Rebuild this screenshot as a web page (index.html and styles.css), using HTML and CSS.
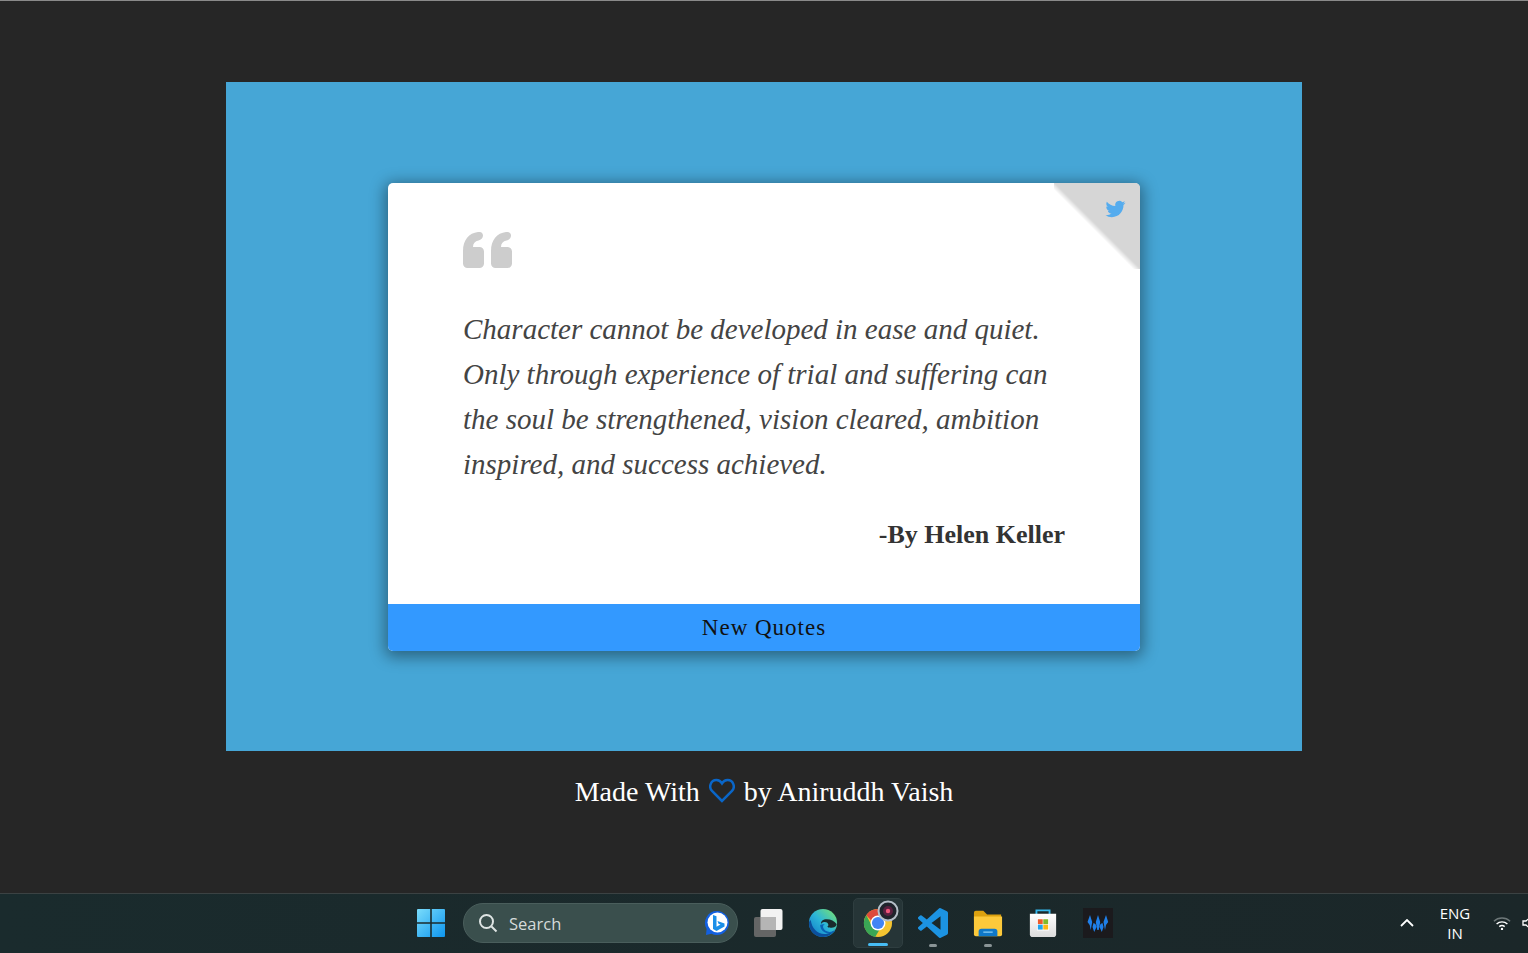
FILE: index.html
```html
<!DOCTYPE html>
<html lang="en">
<head>
    <meta charset="UTF-8">
    <meta name="viewport" content="width=device-width, initial-scale=1.0">
    <title>Random Quotes</title>
    <link rel="stylesheet" href="styles.css">
</head>
<body>
    <main class="page">
        <section class="panel">
            <div class="card">
                <a class="tweet" href="#" aria-label="Tweet this quote">
                    <svg class="tweet-icon" viewBox="0 0 24 24"><path d="M23.953 4.57a10 10 0 01-2.825.775 4.958 4.958 0 002.163-2.723c-.951.555-2.005.959-3.127 1.184a4.92 4.92 0 00-8.384 4.482C7.69 8.095 4.067 6.13 1.64 3.162a4.822 4.822 0 00-.666 2.475c0 1.71.87 3.213 2.188 4.096a4.904 4.904 0 01-2.228-.616v.06a4.923 4.923 0 003.946 4.827 4.996 4.996 0 01-2.212.085 4.936 4.936 0 004.604 3.417 9.867 9.867 0 01-6.102 2.105c-.39 0-.779-.023-1.17-.067a13.995 13.995 0 007.557 2.209c9.053 0 13.998-7.496 13.998-13.985 0-.21 0-.42-.015-.63A9.935 9.935 0 0024 4.59z"/></svg>
                </a>
                <div class="card-body">
                    <svg class="quote-mark" viewBox="0 0 49 36"><path d="M4.500 36A4.500 4.500 0 0 1 0 31.500V19C0 8 6 1 15 0c3-.3 5 1 5 3.500S18 8 15.500 8.500C12 9.200 10 11.500 10 15h6.500a4.500 4.500 0 0 1 4.500 4.500v12a4.500 4.500 0 0 1-4.500 4.500zM32.500 36a4.500 4.500 0 0 1-4.500-4.500V19c0-11 6-18 15-19 3-.3 5 1 5 3.500S46 8 43.500 8.500C40 9.200 38 11.500 38 15h6.500a4.500 4.500 0 0 1 4.500 4.500v12a4.500 4.500 0 0 1-4.500 4.500z"/></svg>
                    <p class="quote">Character cannot be developed in ease and quiet.<br>Only through experience of trial and suffering can<br>the soul be strengthened, vision cleared, ambition<br>inspired, and success achieved.</p>
                    <p class="author">-By Helen Keller</p>
                </div>
                <button class="new-quote" type="button">New Quotes</button>
            </div>
        </section>
        <p class="credit">Made With
            <svg class="heart" viewBox="0 0 26 24"><path d="M13 22.500 3 12.400C-.6 8.700 1.600 1.500 7.400 1.500c2.600 0 4.400 1.300 5.600 3.300 1.200-2 3-3.300 5.600-3.300 5.800 0 8 7.200 4.400 10.900z"/></svg>
            by Aniruddh Vaish</p>
    </main>

    <footer class="taskbar">
        <div class="tile start">
            <svg class="icon" viewBox="0 0 30 30">
                <defs>
                    <linearGradient id="win" x1="0" y1="0" x2="1" y2="1"><stop offset="0" stop-color="#7adcfb"/><stop offset="1" stop-color="#0d95ee"/></linearGradient>
                </defs>
                <path fill="url(#win)" d="M1 2a1 1 0 0 1 1-1h12.200v13.200H1zM15.800 1H28a1 1 0 0 1 1 1v12.200H15.800zM1 15.800h13.200V29H2a1 1 0 0 1-1-1zM15.800 15.800H29V28a1 1 0 0 1-1 1H15.800z"/>
            </svg>
        </div>

        <div class="search">
            <svg class="search-icon" viewBox="0 0 20 20"><circle cx="8.500" cy="8.500" r="6.500"/><path d="m13.500 13.500 5 5"/></svg>
            <span class="search-label">Search</span>
            <svg class="bing" viewBox="0 0 26 26">
                <path fill="#1360e0" d="M13 1a12 12 0 1 1-5.500 22.700L2 25l.6-6A12 12 0 0 1 13 1z"/>
                <circle cx="13.500" cy="12.500" r="10" fill="#fff"/>
                <path fill="#1b8fe8" d="M9 5l3.500 1.200v10.600l4-2.200-2-.9-1-2.700 7 2.400v3.100L12.500 21 9 19z"/>
            </svg>
        </div>

        <div class="tile">
            <svg class="icon" viewBox="0 0 30 30">
                <rect x="7.500" y="1" width="22" height="21" rx="2" fill="#f2f2f2"/>
                <rect x="1" y="9" width="22" height="20" rx="2" fill="#6a6a6a" fill-opacity=".92"/>
                <rect x="7.500" y="9" width="15.500" height="13" fill="#b5b5b5"/>
            </svg>
        </div>

        <div class="tile">
            <svg class="icon" viewBox="0 0 32 32">
                <defs>
                    <linearGradient id="edge-top" x1="0" y1="1" x2="1" y2="0"><stop offset="0" stop-color="#0d72c9"/><stop offset=".5" stop-color="#2cb6d8"/><stop offset="1" stop-color="#7fe668"/></linearGradient>
                </defs>
                <circle cx="16" cy="16" r="15" fill="url(#edge-top)"/>
                <path fill="#0c4f9c" d="M3 13c1 9 8 16 17 14.500 4-.7 7-2.500 9-5-3 5.500-7.500 8.500-13 8.500C8 31 1 24.500 1 16c0-1.500 1-3 2-3z"/>
                <path fill="#1a2a2c" d="M14 17c-.5-3 2-5 6-5 4.500 0 8 2 10.500 5 0 2.500-2.500 4-6.500 4-1.500 0-3-.5-3.500-1 1-.5 1.500-1.500 1-3-.5-1.500-2.500-2.500-4.500-2-1.500.3-2.500 1-3 2z"/>
                <path fill="#0a62b4" d="M13 18c0 5 4 9 10 9 3 0 5-1 6-3-2 1-4 1.500-6 1.500-3 0-6-2-7-5 0-2 1-3 2-3.500-2.500 0-4.500 1-5 1z"/>
            </svg>
        </div>

        <div class="tile active">
            <svg class="icon" viewBox="0 0 32 32">
                <circle cx="16" cy="16" r="15" fill="#f4c430"/>
                <path fill="#dd4a3c" d="M16 1a15 15 0 0 1 13 7.500H16a7.500 7.500 0 0 0-7 5L3.500 7.800A15 15 0 0 1 16 1z"/>
                <path fill="#3aa655" d="M3.500 7.800 9.800 19.700a7.500 7.500 0 0 0 7.600 3.800L13 31A15 15 0 0 1 3.500 7.800z"/>
                <circle cx="16" cy="16" r="8" fill="#fff"/>
                <circle cx="16" cy="16" r="6.500" fill="#4285f4"/>
            </svg>
            <svg class="badge" viewBox="0 0 22 22">
                <circle cx="11" cy="11" r="9.500" fill="#20242c" stroke="#b5bfc8" stroke-width="2"/>
                <circle cx="11" cy="11" r="5" fill="#5a2140"/>
                <circle cx="11" cy="11" r="2.200" fill="#f0567a"/>
            </svg>
            <span class="dot dot-long"></span>
        </div>

        <div class="tile">
            <svg class="icon" viewBox="0 0 24 24"><path fill="#1c93e2" d="M23.150 2.587 18.210.21a1.494 1.494 0 0 0-1.705.29l-9.460 8.630-4.120-3.128a.999.999 0 0 0-1.276.057L.327 7.261A1 1 0 0 0 .326 8.740L3.899 12 .326 15.260a1 1 0 0 0 .001 1.479L1.650 17.940a.999.999 0 0 0 1.276.057l4.120-3.128 9.460 8.630a1.492 1.492 0 0 0 1.704.29l4.942-2.377A1.500 1.500 0 0 0 24 20.060V3.939a1.500 1.500 0 0 0-.85-1.352zm-5.146 14.861L10.826 12l7.178-5.448v10.896z"/></svg>
            <span class="dot"></span>
        </div>

        <div class="tile">
            <svg class="icon" viewBox="0 0 32 32">
                <path fill="#dca10f" d="M1 5a2 2 0 0 1 2-2h8l4 4h15v6H1z"/>
                <path fill="#fcc93b" d="M1 9h30v19a2 2 0 0 1-2 2H3a2 2 0 0 1-2-2z"/>
                <path fill="#0f78c9" d="M6 30v-5a3 3 0 0 1 3-3h14a3 3 0 0 1 3 3v5z"/>
                <rect x="11" y="25" width="10" height="1.500" fill="#7cc6f2"/>
            </svg>
            <span class="dot"></span>
        </div>

        <div class="tile">
            <svg class="icon" viewBox="0 0 30 32">
                <defs>
                    <linearGradient id="bag" x1="0" y1="0" x2="0" y2="1"><stop offset="0" stop-color="#fff"/><stop offset="1" stop-color="#dcdcdc"/></linearGradient>
                </defs>
                <path fill="none" stroke="#35b6ea" stroke-width="2" d="M8 7V2.500h14V7"/>
                <path fill="url(#bag)" d="M1 6h28v22a3 3 0 0 1-3 3H4a3 3 0 0 1-3-3z"/>
                <rect x="8.500" y="11" width="13" height="13" fill="#fff"/>
                <rect x="9.500" y="12" width="5.200" height="5.200" fill="#ee5b2a"/>
                <rect x="15.300" y="12" width="5.200" height="5.200" fill="#7fba2c"/>
                <rect x="9.500" y="17.800" width="5.200" height="5.200" fill="#1fa4ee"/>
                <rect x="15.300" y="17.800" width="5.200" height="5.200" fill="#fdb813"/>
            </svg>
        </div>

        <div class="tile">
            <svg class="icon" viewBox="0 0 30 30">
                <rect width="30" height="30" fill="#1b1a1d"/>
                <path fill="#1f7fe8" d="M7 7l2.200 7-1.500 8-1-5-2.200-3zM15 7l2.200 7-1.500 8h-1.400l-1.500-8zM23 7l2.200 7-2.200 3-1 5-1.500-8zM10.500 15l2 1 1 3-2.300 5-1.700-5zM19.500 15l1 4-1.700 5-2.300-5 1-3z"/>
            </svg>
        </div>

        <div class="tray">
            <svg class="chevron" viewBox="0 0 14 8"><path d="M1 7l6-6 6 6"/></svg>
            <div class="lang"><span>ENG</span><span>IN</span></div>
            <svg class="wifi" viewBox="0 0 20 16">
                <path class="wifi-dim" d="M1 5.500a13 13 0 0 1 18 0"/>
                <path d="M4 8.500a9 9 0 0 1 12 0M7 11.500a4.500 4.500 0 0 1 6 0"/>
                <circle cx="10" cy="14" r="1.300"/>
            </svg>
            <svg class="speaker" viewBox="0 0 14 14"><path d="M1 5v4h3l4 3.500v-11L4 5z"/></svg>
        </div>
    </footer>
</body>
</html>
```

FILE: styles.css
```css
* {
    box-sizing: border-box;
}

html, body {
    height: 100%;
}

body {
    margin: 0;
    background-color: #262626;
    border-top: 1px solid #8a8a8a;
    font-family: "Liberation Serif", serif;
    display: flex;
    flex-direction: column;
    overflow: hidden;
}

.page {
    flex: 1;
    display: flex;
    flex-direction: column;
    align-items: center;
    padding-top: 81px;
}

.panel {
    width: 1076px;
    height: 669px;
    background-color: #46a6d6;
    display: flex;
    align-items: center;
    justify-content: center;
}

.card {
    position: relative;
    width: 752px;
    height: 468px;
    background-color: #fff;
    border-radius: 5px;
    box-shadow: 0 3px 15px 3px rgba(0, 0, 0, 0.4);
    display: flex;
    flex-direction: column;
    overflow: hidden;
}

.tweet {
    position: absolute;
    top: 0;
    right: 0;
    width: 86px;
    height: 86px;
    background-color: #d6d6d6;
    clip-path: polygon(0 0, 100% 0, 100% 100%);
}

.card::before {
    content: "";
    position: absolute;
    top: 0;
    right: 0;
    width: 86px;
    height: 86px;
    background: linear-gradient(45deg, rgba(0, 0, 0, 0) 46%, rgba(0, 0, 0, 0.14) 50%);
}

.tweet-icon {
    position: absolute;
    top: 16px;
    right: 13px;
    width: 23px;
    height: 20px;
    fill: #55acee;
}

.card-body {
    flex: 1;
    padding: 49px 75px 0;
}

.quote-mark {
    display: block;
    width: 49px;
    height: 36px;
    fill: #cdcdcd;
}

.quote {
    margin: 39px 0 0;
    font-size: 29px;
    font-style: italic;
    line-height: 45px;
    color: #444;
    white-space: nowrap;
}

.author {
    margin: 33px 0 0;
    font-size: 26px;
    font-weight: bold;
    line-height: 30px;
    color: #333;
    text-align: right;
}

.new-quote {
    height: 47px;
    padding: 2px 0 0;
    border: 0;
    background-color: #3399ff;
    color: #111;
    font-family: "Liberation Serif", serif;
    font-size: 23px;
    letter-spacing: 1px;
}

.credit {
    margin: 24px 0 0;
    color: #fff;
    font-size: 28px;
    line-height: 34px;
    white-space: nowrap;
}

.heart {
    width: 26px;
    height: 25px;
    margin: 0 2px;
    fill: none;
    stroke: #0a66c8;
    stroke-width: 2.500;
    vertical-align: -2px;
}

.taskbar {
    height: 60px;
    flex-shrink: 0;
    background: linear-gradient(90deg, #1a2b2d, #1b2729);
    border-top: 1px solid #3b4243;
    display: flex;
    align-items: center;
    padding: 0 0 1px 406px;
    overflow: hidden;
}

.tile {
    position: relative;
    width: 50px;
    height: 50px;
    margin-right: 5px;
    border-radius: 5px;
    flex-shrink: 0;
    display: flex;
    align-items: center;
    justify-content: center;
}

.start {
    margin-right: 7px;
}

.icon {
    width: 30px;
    height: 30px;
}

.active {
    background-color: #263537;
    border: 1px solid #2f3e40;
}

.badge {
    position: absolute;
    top: 1px;
    right: 3px;
    width: 22px;
    height: 22px;
}

.dot {
    position: absolute;
    bottom: 1px;
    left: 50%;
    width: 8px;
    height: 3px;
    margin-left: -4px;
    border-radius: 2px;
    background-color: #8a9496;
}

.dot-long {
    width: 20px;
    margin-left: -10px;
    background-color: #47bdf5;
}

.search {
    width: 275px;
    height: 40px;
    margin-right: 5px;
    flex-shrink: 0;
    border-radius: 20px;
    background-color: #3a4f4d;
    border: 1px solid #4a5e5c;
    display: flex;
    align-items: center;
    padding: 0 7px 0 14px;
}

.search-icon {
    width: 20px;
    height: 20px;
    fill: none;
    stroke: #dfe5e4;
    stroke-width: 2;
}

.search-label {
    margin-left: 11px;
    flex: 1;
    color: #d5dbda;
    font-family: "Open Sans", sans-serif;
    font-size: 16.500px;
}

.bing {
    width: 26px;
    height: 26px;
}

.tray {
    margin-left: 272px;
    flex-shrink: 0;
    display: flex;
    align-items: center;
    color: #fff;
}

.chevron {
    width: 14px;
    height: 8px;
    fill: none;
    stroke: #fff;
    stroke-width: 1.800;
}

.lang {
    width: 60px;
    margin-left: 11px;
    display: flex;
    flex-direction: column;
    align-items: center;
    font-family: "Open Sans", sans-serif;
    font-size: 15px;
    line-height: 20px;
}

.wifi {
    width: 18px;
    height: 15px;
    margin-left: 8px;
    fill: none;
    stroke: #fff;
    stroke-width: 1.600;
}

.wifi circle {
    fill: #fff;
    stroke: none;
}

.wifi-dim {
    stroke: #6d7778;
}

.speaker {
    width: 14px;
    height: 14px;
    margin-left: 11px;
    flex-shrink: 0;
    fill: none;
    stroke: #fff;
    stroke-width: 1.300;
}
```
